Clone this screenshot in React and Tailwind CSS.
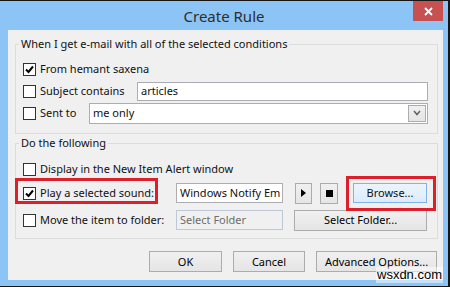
const font = { fontFamily: '"Noto Sans", "Open Sans", sans-serif' };

function Check({ checked }) {
    return (
        <span className="w-[13px] h-[13px] border border-[#333333] bg-white flex items-center justify-center shrink-0">
            {checked && (
                <svg width="11" height="11" viewBox="0 0 11 11">
                    <path d="M2 5.5 L4.5 8 L9 2.5" fill="none" stroke="#000" strokeWidth="2" />
                </svg>
            )}
        </span>
    );
}

function CheckLabel({ checked, children, width }) {
    return (
        <div className="flex items-center shrink-0" style={{ width }}>
            <Check checked={checked} />
            <span className="ml-[4px] whitespace-nowrap">{children}</span>
        </div>
    );
}

const btn = 'h-[21px] border border-[#acacac] bg-gradient-to-b from-[#f0f0f0] to-[#e5e5e5] flex items-center justify-center text-black';

export default function App() {
    return (
        <div className="relative w-[450px] h-[287px] bg-[#161616] pt-px text-[11px] text-[#111] leading-[16px]" style={font}>
            <div className="w-[448px] h-[285px] bg-[#8bc4f5] flex flex-col">
                {/* title bar */}
                <div className="h-[29px] flex items-start">
                    <div className="flex-1 pl-[35px] pt-[5px] text-center text-[15px] leading-[20px] text-[#2e2e2e]">Create Rule</div>
                    <div className="w-[30px] h-[20px] mr-[5px] bg-[#c75050] flex items-center justify-center">
                        <svg width="9" height="9" viewBox="0 0 9 9">
                            <path d="M1 1 L8 8 M8 1 L1 8" stroke="#fff" strokeWidth="1.8" />
                        </svg>
                    </div>
                </div>

                {/* client area */}
                <div className="ml-[8px] w-[435px] h-[250px] bg-[#f0f0f0] pl-[7px] pr-[5px] pt-[6px] flex flex-col">
                    <fieldset className="border border-[#dcdcdc] pl-[7px] pb-[9px]">
                        <legend className="-ml-[4px] px-[2px] leading-[16px]">When I get e-mail with all of the selected conditions</legend>
                        <div className="h-[22px] mt-[6px] flex items-center">
                            <CheckLabel checked width={200}>From hemant saxena</CheckLabel>
                        </div>
                        <div className="h-[22px] flex items-center">
                            <CheckLabel width={114}>Subject contains</CheckLabel>
                            <div className="w-[291px] h-[19px] border border-[#abadb3] bg-white px-[3px] flex items-center">articles</div>
                        </div>
                        <div className="h-[22px] flex items-center">
                            <CheckLabel width={66}>Sent to</CheckLabel>
                            <div className="w-[339px] h-[21px] border border-[#abadb3] bg-white pl-[3px] flex items-center">
                                <span className="flex-1">me only</span>
                                <div className="w-[18px] h-[17px] mr-px border border-[#acacac] bg-gradient-to-b from-[#f0f0f0] to-[#e5e5e5] flex items-center justify-center">
                                    <svg width="8" height="6" viewBox="0 0 8 6">
                                        <path d="M1 1 L4 4.5 L7 1" fill="none" stroke="#606060" strokeWidth="1.5" />
                                    </svg>
                                </div>
                            </div>
                        </div>
                    </fieldset>

                    <fieldset className="mt-[1px] border border-[#dcdcdc] pl-[7px] pb-[6px]">
                        <legend className="-ml-[4px] px-[2px] leading-[16px]">Do the following</legend>
                        <div className="h-[22px] mt-[7px] flex items-center">
                            <CheckLabel width={300}>Display in the New Item Alert window</CheckLabel>
                        </div>
                        <div className="h-[26px] flex items-center">
                            <div className="relative shrink-0">
                                <CheckLabel checked width={153}>Play a selected sound:</CheckLabel>
                                <div className="absolute -left-[8px] top-[-7px] w-[143px] h-[26px] border-[3px] border-[#dc1f2b]" />
                            </div>
                            <div className="w-[107px] h-[20px] border border-[#abadb3] bg-white px-[3px] flex items-center overflow-hidden whitespace-nowrap">Windows Notify Em</div>
                            <div className={`${btn} ml-[12px] w-[17px]`}>
                                <svg width="5" height="8" viewBox="0 0 5 8"><path d="M0 0 L5 4 L0 8 Z" fill="#000" /></svg>
                            </div>
                            <div className={`${btn} ml-[8px] w-[18px]`}>
                                <span className="w-[7px] h-[7px] bg-black" />
                            </div>
                            <div className="relative ml-[15px]">
                                <div className="w-[74px] h-[20px] border border-[#7eb4ea] bg-gradient-to-b from-[#ecf4fc] to-[#dcecfc] flex items-center justify-center">Browse...</div>
                                <div className="absolute -left-[7px] -top-[7px] -right-[9px] -bottom-[8px] border-[3px] border-[#dc1f2b]" />
                            </div>
                        </div>
                        <div className="h-[24px] mt-[2px] flex items-center">
                            <CheckLabel width={153}>Move the item to folder:</CheckLabel>
                            <div className="w-[107px] h-[20px] border border-[#bcc7d8] bg-[#f0f0f0] px-[3px] flex items-center text-[#6d6d6d]">Select Folder</div>
                            <div className={`${btn} ml-[11px] w-[133px]`}>Select Folder...</div>
                        </div>
                    </fieldset>

                    <div className="mt-[12px] pr-px flex justify-end gap-[11px]">
                        <div className={`${btn} w-[73px]`}>OK</div>
                        <div className={`${btn} w-[72px]`}>Cancel</div>
                        <div className={`${btn} w-[121px]`}>Advanced Options...</div>
                    </div>
                </div>
            </div>
            <div className="absolute left-[376px] top-[267px] px-px bg-white/50 text-[13px] leading-[16px] text-black" style={{ fontFamily: '"Liberation Sans", sans-serif' }}>wsxdn.com</div>
        </div>
    );
}
